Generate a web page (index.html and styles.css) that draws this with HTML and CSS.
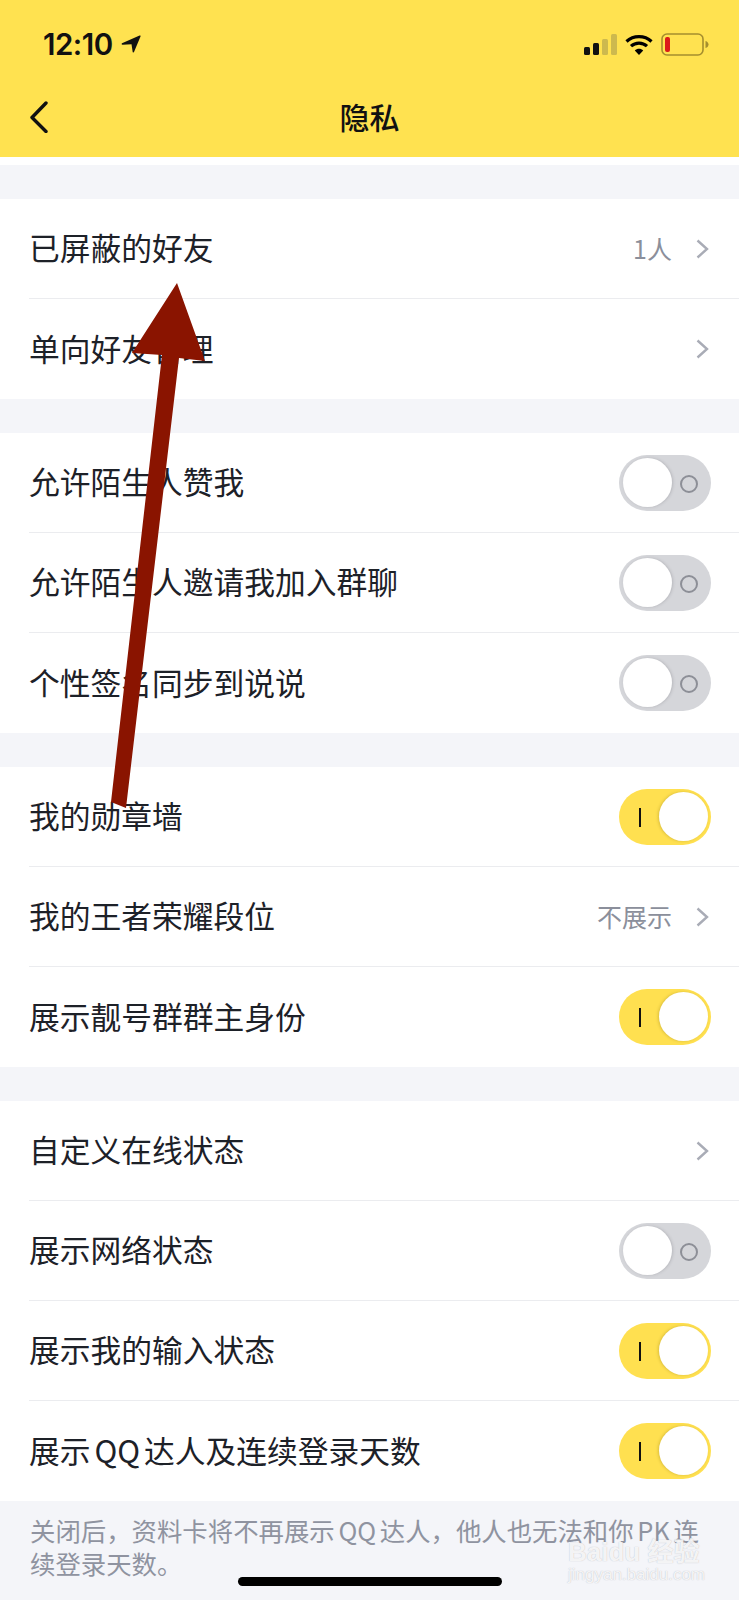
FILE: index.html
```html
<!DOCTYPE html>
<html lang="zh-CN">
<head>
<meta charset="utf-8">
<title>隐私</title>
<link rel="stylesheet" href="styles.css">
</head>
<body>
<div class="page">
  <header class="header">
    <div class="status">
      <div class="status-left">
        <span class="time">12:10</span>
        <svg class="loc" viewBox="0 0 20 18"><path d="M1 8.200 18.600.6c.7-.3 1.200.2.9.9L13 17c-.3.7-1.200.6-1.300-.1L10.500 9.300 1.500 9.700C.6 9.700.3 8.600 1 8.200Z"/></svg>
      </div>
      <div class="status-right">
        <svg class="signal" viewBox="0 0 33 21">
          <rect x="0" y="13" width="6" height="8" rx="1.500" fill="#111"/>
          <rect x="9" y="9" width="6" height="12" rx="1.500" fill="#111"/>
          <rect x="18" y="5" width="6" height="16" rx="1.500" fill="#cdb94e"/>
          <rect x="27" y="0" width="6" height="21" rx="1.500" fill="#cdb94e"/>
        </svg>
        <svg class="wifi" viewBox="0 0 28 21">
          <path d="M1.500 7.500C8.500 1 19.500 1 26.500 7.500" fill="none" stroke="#000" stroke-width="3.200"/>
          <path d="M6 12.200C10.500 8 17.500 8 22 12.200" fill="none" stroke="#000" stroke-width="3.200"/>
          <path d="M14 21 9.800 16.500C12 14.300 16 14.300 18.200 16.500Z" fill="#000"/>
        </svg>
        <svg class="battery" viewBox="0 0 48 23">
          <rect x="1" y="1" width="41" height="21" rx="5" fill="none" stroke="#a58e2e" stroke-width="1.600"/>
          <rect x="4" y="4" width="5" height="15" rx="2" fill="#dc1a1a"/>
          <path d="M44.500 8c2 .5 3 2 3 3.500s-1 3-3 3.500Z" fill="#a58e2e"/>
        </svg>
      </div>
    </div>
    <div class="nav">
      <svg class="back" viewBox="0 0 20 32"><path d="M17 2 3 16.500 17 30.500" fill="none" stroke="#111" stroke-width="3.400" stroke-linecap="round" stroke-linejoin="round"/></svg>
      <h1 class="title">隐私</h1>
    </div>
  </header>
  <div class="strip"></div>

  <section class="group">
    <div class="row"><span class="label">已屏蔽的好友</span><span class="value">1人</span><svg class="chev" viewBox="0 0 13 20"><path d="M1.500 1.500 11 10 1.500 18.500" fill="none" stroke="#a9acb6" stroke-width="2.400"/></svg></div>
    <div class="row"><span class="label">单向好友管理</span><svg class="chev" viewBox="0 0 13 20"><path d="M1.500 1.500 11 10 1.500 18.500" fill="none" stroke="#a9acb6" stroke-width="2.400"/></svg></div>
  </section>

  <section class="group">
    <div class="row"><span class="label">允许陌生人赞我</span><span class="switch"><span class="knob"></span><span class="ring"></span></span></div>
    <div class="row"><span class="label">允许陌生人邀请我加入群聊</span><span class="switch"><span class="knob"></span><span class="ring"></span></span></div>
    <div class="row"><span class="label">个性签名同步到说说</span><span class="switch"><span class="knob"></span><span class="ring"></span></span></div>
  </section>

  <section class="group">
    <div class="row"><span class="label">我的勋章墙</span><span class="switch on"><span class="bar"></span><span class="knob"></span></span></div>
    <div class="row"><span class="label">我的王者荣耀段位</span><span class="value">不展示</span><svg class="chev" viewBox="0 0 13 20"><path d="M1.500 1.500 11 10 1.500 18.500" fill="none" stroke="#a9acb6" stroke-width="2.400"/></svg></div>
    <div class="row"><span class="label">展示靓号群群主身份</span><span class="switch on"><span class="bar"></span><span class="knob"></span></span></div>
  </section>

  <section class="group">
    <div class="row"><span class="label">自定义在线状态</span><svg class="chev" viewBox="0 0 13 20"><path d="M1.500 1.500 11 10 1.500 18.500" fill="none" stroke="#a9acb6" stroke-width="2.400"/></svg></div>
    <div class="row"><span class="label">展示网络状态</span><span class="switch"><span class="knob"></span><span class="ring"></span></span></div>
    <div class="row"><span class="label">展示我的输入状态</span><span class="switch on"><span class="bar"></span><span class="knob"></span></span></div>
    <div class="row"><span class="label tight">展示 QQ 达人及连续登录天数</span><span class="switch on"><span class="bar"></span><span class="knob"></span></span></div>
  </section>

  <footer class="note">
    <p class="note-text">关闭后，资料卡将不再展示 QQ 达人，他人也无法和你 PK 连续登录天数。</p>
  </footer>

  <div class="home"></div>
  <div class="mark"><span class="mark-logo">Baidu 经验</span><span class="mark-url">jingyan.baidu.com</span></div>
  <svg class="arrow" viewBox="0 0 739 1600"><path d="M177 283 205 361 179 358 126 808 111 802 162 355 132 353Z" fill="#8a1400"/></svg>
</div>
</body>
</html>
```
FILE: styles.css
```css
* { box-sizing: border-box; }
html, body { margin: 0; padding: 0; }
body {
  background: #fff;
  font-family: "Noto Sans CJK SC", "Noto Sans", sans-serif;
  color: #1d2128;
}
.page {
  position: relative;
  width: 739px;
  height: 1600px;
  overflow: hidden;
  background: #f4f5f9;
}
.header {
  height: 157px;
  background: #ffe250;
  display: flex;
  flex-direction: column;
}
.status {
  height: 88px;
  padding: 0 30px 0 43px;
  display: flex;
  justify-content: space-between;
  align-items: center;
}
.status-left { display: flex; align-items: center; gap: 8px; }
.time {
  font-family: Inter, Roboto, sans-serif;
  font-size: 29.500px;
  font-weight: 600;
  color: #111;
  letter-spacing: -0.500px;
}
.loc { width: 20px; height: 18px; fill: #111; }
.status-right { display: flex; align-items: center; gap: 8px; }
.signal { width: 33px; height: 21px; }
.wifi { width: 28px; height: 21px; }
.battery { width: 48px; height: 23px; }
.nav {
  position: relative;
  height: 60px;
  padding-bottom: 4px;
  display: flex;
  align-items: center;
  justify-content: center;
}
.back {
  position: absolute;
  left: 29px;
  top: 13px;
  width: 20px;
  height: 32px;
}
.title {
  margin: 0;
  font-size: 30px;
  font-weight: 500;
  color: #111;
}
.strip { height: 8px; background: #fff; }
.group {
  margin-top: 34px;
  background: #fff;
  padding-left: 29px;
}
.row {
  height: 100px;
  display: flex;
  align-items: center;
  padding-right: 28px;
  border-bottom: 1px solid #ebecef;
}
.group .row:last-child { border-bottom: 0; }
.label {
  flex: 1;
  font-size: 30.750px;
  line-height: 40px;
  padding-bottom: 3px;
}
.label.tight { word-spacing: -3px; }
.value {
  font-size: 25px;
  color: #8b8f9b;
  margin-right: 24px;
  padding-bottom: 2px;
}
.chev { width: 13px; height: 20px; margin-right: 2px; }
.switch {
  position: relative;
  width: 92px;
  height: 56px;
  border-radius: 28px;
  background: #d5d6da;
  display: block;
}
.knob {
  position: absolute;
  left: 4px;
  top: 3px;
  width: 49px;
  height: 49px;
  border-radius: 50%;
  background: #fff;
  box-shadow: 1px 0 3px rgba(90, 90, 100, 0.250);
}
.ring {
  position: absolute;
  left: 61px;
  top: 20px;
  width: 18px;
  height: 18px;
  border: 2px solid #8d8f97;
  border-radius: 50%;
}
.switch.on { background: #ffe050; }
.switch.on .knob { left: 40px; top: 3px; box-shadow: -1px 0 3px rgba(130, 110, 20, 0.300); }
.bar {
  position: absolute;
  left: 20px;
  top: 19px;
  width: 2px;
  height: 19px;
  background: #111;
}
.note {
  padding: 13px 30px 0;
}
.note-text {
  margin: 0;
  font-size: 25.400px;
  line-height: 33px;
  word-spacing: -2px;
  color: #8f93a0;
}
.home {
  position: absolute;
  left: 238px;
  top: 1577px;
  width: 264px;
  height: 9px;
  border-radius: 5px;
  background: #000;
}
.mark {
  position: absolute;
  left: 568px;
  top: 1540px;
  display: flex;
  flex-direction: column;
  color: rgba(255, 255, 255, 0.850);
  font-family: "Liberation Sans", "Noto Sans CJK SC", sans-serif;
  text-shadow: 0 0 1px rgba(120, 120, 130, 0.500);
}
.mark-logo { font-size: 26px; line-height: 25px; font-weight: 700; white-space: nowrap; }
.mark-url { font-size: 17px; line-height: 20px; white-space: nowrap; }
.arrow {
  position: absolute;
  left: 0;
  top: 0;
  width: 739px;
  height: 1600px;
  pointer-events: none;
}
```
